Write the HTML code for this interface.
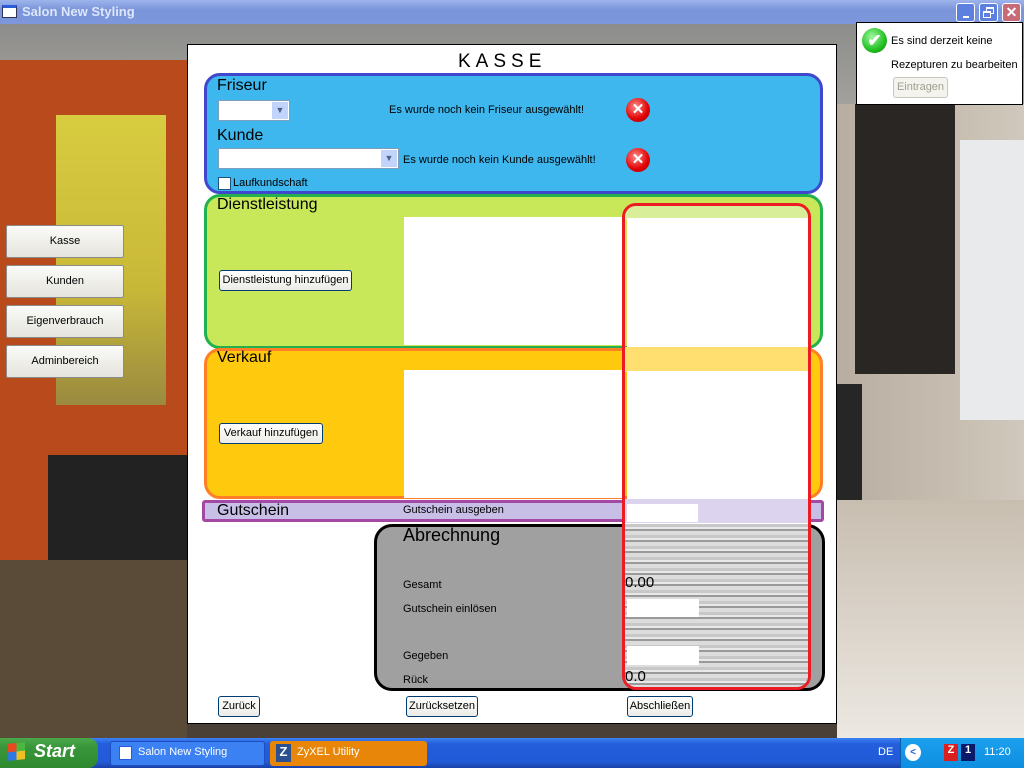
<!DOCTYPE html>
<html><head><meta charset="utf-8"><style>
*{margin:0;padding:0;box-sizing:border-box}
body{width:1024px;height:768px;overflow:hidden;position:relative;font-family:"Liberation Sans",sans-serif;font-size:11px;background:#8a7a6a}
.a{position:absolute;white-space:nowrap}
.btn{position:absolute;background:linear-gradient(#fff,#ecebe6);border:1px solid #003c74;border-radius:3px;font-size:11px;text-align:center;color:#000;white-space:nowrap}
.lb{position:absolute;left:6px;width:118px;height:33px;line-height:31px;background:linear-gradient(#fbfbf9,#e4e3dc);border:1px solid #8c8c8c;border-radius:2px;text-align:center;font-size:11px}
.h{position:absolute;font-size:16px;font-family:"Liberation Sans",sans-serif;color:#000;white-space:nowrap}
.wh{position:absolute;background:#fff}
.xi{position:absolute;width:24px;height:24px;border-radius:50%;background:radial-gradient(circle at 40% 35%,#ff8a8a,#e00000 60%,#a00000);color:#fff;font-weight:bold;font-size:15px;line-height:24px;text-align:center}
.noise{background:repeating-linear-gradient(#c8c8c8 0 3px,#e8e8e8 3px 5px,#9a9a9a 5px 7px,#dcdcdc 7px 11px)}
</style></head><body>
<div class="a" style="left:0;top:22px;width:1024px;height:150px;background:linear-gradient(#8c8c8a,#b5b2ac)"></div>
<div class="a" style="left:0;top:60px;width:190px;height:520px;background:#b84a1c"></div>
<div class="a" style="left:56px;top:115px;width:110px;height:290px;background:linear-gradient(#d8cc40,#c8b838 60%,#9a8a40)"></div>
<div class="a" style="left:48px;top:455px;width:140px;height:283px;background:#222"></div>
<div class="a" style="left:0;top:560px;width:190px;height:180px;background:#5a4a38"></div>
<div class="a" style="left:836px;top:104px;width:188px;height:400px;background:linear-gradient(90deg,#b8ada0,#d0c8bc)"></div>
<div class="a" style="left:855px;top:104px;width:100px;height:270px;background:#2a2624"></div>
<div class="a" style="left:960px;top:140px;width:64px;height:280px;background:#e8eaec"></div>
<div class="a" style="left:836px;top:384px;width:26px;height:170px;background:#262626"></div>
<div class="a" style="left:836px;top:500px;width:188px;height:238px;background:linear-gradient(#c8beb0,#ece8e2)"></div>
<div class="a" style="left:187px;top:723px;width:650px;height:15px;background:#4a4038"></div>
<div class="a" style="left:0;top:0;width:1024px;height:24px;background:linear-gradient(#9db4ec,#7b95da 40%,#7d96dc)"></div>
<div class="a" style="left:2px;top:5px;width:15px;height:13px;background:#fff;border:1px solid #335;border-top:3px solid #2b5bd8"></div>
<div class="a" style="left:22px;top:4px;color:#dde6fa;font-weight:bold;font-size:13px">Salon New Styling</div>
<div class="a" style="left:956px;top:3px;width:19px;height:19px;background:#5c7fe0;border:1px solid #fff;border-radius:3px"><div class="a" style="left:6px;top:12px;width:6px;height:2px;background:#fff"></div></div>
<div class="a" style="left:979px;top:3px;width:19px;height:19px;background:#5c7fe0;border:1px solid #fff;border-radius:3px"><div class="a" style="left:6px;top:3px;width:8px;height:7px;border:1px solid #fff;border-top-width:2px"></div><div class="a" style="left:3px;top:7px;width:8px;height:7px;border:1px solid #fff;border-top-width:2px;background:#5c7fe0"></div></div>
<div class="a" style="left:1002px;top:3px;width:19px;height:19px;background:#c86a78;border:1px solid #fff;border-radius:3px;color:#fff;font-size:14px;text-align:center;line-height:16px;font-weight:bold">✕</div>
<div class="a" style="left:856px;top:22px;width:167px;height:83px;background:#fff;border:1px solid #000"></div>
<div class="a" style="left:862px;top:28px;width:25px;height:25px;border-radius:50%;background:radial-gradient(circle at 40% 35%,#9ef79e,#22c022 60%,#0a8a0a);color:#fff;font-size:17px;text-align:center;line-height:25px;font-weight:bold">✔</div>
<div class="a" style="left:891px;top:35px">Es sind derzeit keine</div>
<div class="a" style="left:891px;top:59px">Rezepturen zu bearbeiten</div>
<div class="a" style="left:893px;top:77px;width:55px;height:21px;border:1px solid #c9c7ba;border-radius:3px;background:#f4f3ee;color:#a0a090;text-align:center;line-height:19px">Eintragen</div>
<div class="lb" style="top:225px">Kasse</div>
<div class="lb" style="top:265px">Kunden</div>
<div class="lb" style="top:305px">Eigenverbrauch</div>
<div class="lb" style="top:345px">Adminbereich</div>
<div class="a" style="left:187px;top:44px;width:650px;height:680px;background:#fff;border:1px solid #000"></div>
<div class="a" style="left:458px;top:51px;font-size:19px;letter-spacing:5px">KASSE</div>
<div class="a" style="left:204px;top:73px;width:619px;height:121px;background:#3db7ed;border:3px solid #3f48cc;border-radius:16px"></div>
<div class="h" style="left:217px;top:77px">Friseur</div>
<div class="a" style="left:218px;top:100px;width:72px;height:21px;background:#fff;border:1px solid #7f9db9"><div class="a" style="right:1px;top:1px;width:16px;height:17px;background:#c2d3fc;color:#4d6185;font-size:9px;text-align:center;line-height:17px">▼</div></div>
<div class="a" style="left:389px;top:104px">Es wurde noch kein Friseur ausgewählt!</div>
<div class="xi" style="left:626px;top:98px">✕</div>
<div class="h" style="left:217px;top:127px">Kunde</div>
<div class="a" style="left:218px;top:148px;width:181px;height:21px;background:#fff;border:1px solid #7f9db9"><div class="a" style="right:1px;top:1px;width:16px;height:17px;background:#c2d3fc;color:#4d6185;font-size:9px;text-align:center;line-height:17px">▼</div></div>
<div class="a" style="left:403px;top:154px">Es wurde noch kein Kunde ausgewählt!</div>
<div class="xi" style="left:626px;top:148px">✕</div>
<div class="a" style="left:218px;top:177px;width:13px;height:13px;background:#fff;border:1px solid #1c5180"></div>
<div class="a" style="left:233px;top:177px">Laufkundschaft</div>
<div class="a" style="left:204px;top:194px;width:619px;height:155px;background:#c8e85a;border:3px solid #22b14c;border-radius:16px"></div>
<div class="h" style="left:217px;top:196px">Dienstleistung</div>
<div class="wh" style="left:404px;top:217px;width:218px;height:128px"></div>
<div class="btn" style="left:219px;top:270px;width:133px;height:21px;line-height:19px">Dienstleistung hinzufügen</div>
<div class="a" style="left:204px;top:348px;width:619px;height:151px;background:#ffc90e;border:3px solid #ff7f27;border-radius:16px"></div>
<div class="h" style="left:217px;top:349px">Verkauf</div>
<div class="wh" style="left:404px;top:370px;width:218px;height:128px"></div>
<div class="btn" style="left:219px;top:423px;width:104px;height:21px;line-height:19px">Verkauf hinzufügen</div>
<div class="a" style="left:202px;top:500px;width:622px;height:22px;background:#c8bfe7;border:3px solid #a349a4;border-radius:3px"></div>
<div class="h" style="left:217px;top:502px">Gutschein</div>
<div class="a" style="left:403px;top:504px">Gutschein ausgeben</div>
<div class="a" style="left:374px;top:524px;width:451px;height:167px;background:#a0a0a0;border:3px solid #000;border-radius:18px"></div>
<div class="a" style="left:403px;top:525px;font-size:18px">Abrechnung</div>
<div class="a" style="left:403px;top:579px">Gesamt</div>
<div class="a" style="left:403px;top:603px">Gutschein einlösen</div>
<div class="a" style="left:403px;top:650px">Gegeben</div>
<div class="a" style="left:403px;top:674px">Rück</div>
<div class="a" style="left:622px;top:203px;width:189px;height:487px;border:3px solid #ed1c24;border-radius:14px;overflow:hidden">
 <div class="a" style="left:0;top:0;width:183px;height:14px;background:#d8ee98"></div>
 <div class="wh" style="left:2px;top:12px;width:181px;height:129px"></div>
 <div class="a" style="left:0;top:141px;width:183px;height:25px;background:#ffdf70"></div>
 <div class="wh" style="left:2px;top:165px;width:181px;height:128px"></div>
 <div class="a" style="left:0;top:293px;width:183px;height:24px;background:#dcd4ee"></div>
 <div class="wh" style="left:2px;top:298px;width:71px;height:18px"></div>
 <div class="a noise" style="left:0;top:318px;width:183px;height:170px"></div>
 <div class="wh" style="left:2px;top:393px;width:72px;height:18px"></div>
 <div class="wh" style="left:2px;top:440px;width:72px;height:19px"></div>
</div>
<div class="a" style="left:625px;top:574px;font-size:15px">0.00</div>
<div class="a" style="left:625px;top:668px;font-size:15px">0.0</div>
<div class="btn" style="left:218px;top:696px;width:42px;height:21px;line-height:19px">Zurück</div>
<div class="btn" style="left:406px;top:696px;width:72px;height:21px;line-height:19px">Zurücksetzen</div>
<div class="btn" style="left:627px;top:696px;width:66px;height:21px;line-height:19px">Abschließen</div>
<div class="a" style="left:0;top:738px;width:1024px;height:30px;background:linear-gradient(#3c81f3,#245edb 20%,#225ad8 80%,#1941a5)"></div>
<div class="a" style="left:0;top:738px;width:98px;height:30px;background:linear-gradient(#4aa84a,#3a963a 30%,#2f8a2f);border-radius:0 10px 10px 0"></div>
<div class="a" style="left:8px;top:743px;width:17px;height:17px;background:conic-gradient(#4ab840 0 25%,#f0c020 0 50%,#2a7ae0 0 75%,#e84a20 0);transform:skewY(-6deg)"></div>
<div class="a" style="left:34px;top:741px;color:#fff;font-size:18px;font-weight:bold;font-style:italic">Start</div>
<div class="a" style="left:110px;top:741px;width:155px;height:25px;background:#3c81f3;border-radius:3px;border:1px solid #1c50c0"></div>
<div class="a" style="left:119px;top:746px;width:13px;height:14px;background:#fff;border:1px solid #2b5bd8"></div>
<div class="a" style="left:138px;top:746px;color:#fff">Salon New Styling</div>
<div class="a" style="left:270px;top:741px;width:157px;height:25px;background:#e8860a;border-radius:3px"></div>
<div class="a" style="left:276px;top:744px;width:15px;height:18px;background:#2a5090;color:#fff;font-weight:bold;font-size:13px;text-align:center">Z</div>
<div class="a" style="left:297px;top:746px;color:#fff">ZyXEL Utility</div>
<div class="a" style="left:878px;top:746px;color:#fff">DE</div>
<div class="a" style="left:900px;top:738px;width:124px;height:30px;background:linear-gradient(#1aa0ee,#0f8ee0);border-left:1px solid #0a5ab0"></div>
<div class="a" style="left:905px;top:744px;width:16px;height:17px;border-radius:50%;background:#fff;color:#2060d0;font-size:10px;text-align:center;line-height:17px;font-weight:bold">&lt;</div>
<div class="a" style="left:944px;top:744px;width:14px;height:17px;background:#d82020;color:#fff;font-weight:bold;text-align:center">Z</div>
<div class="a" style="left:961px;top:744px;width:14px;height:17px;background:#0a1a6a;color:#fff;font-weight:bold;text-align:center">1</div>
<div class="a" style="left:984px;top:746px;color:#fff">11:20</div>
</body></html>
